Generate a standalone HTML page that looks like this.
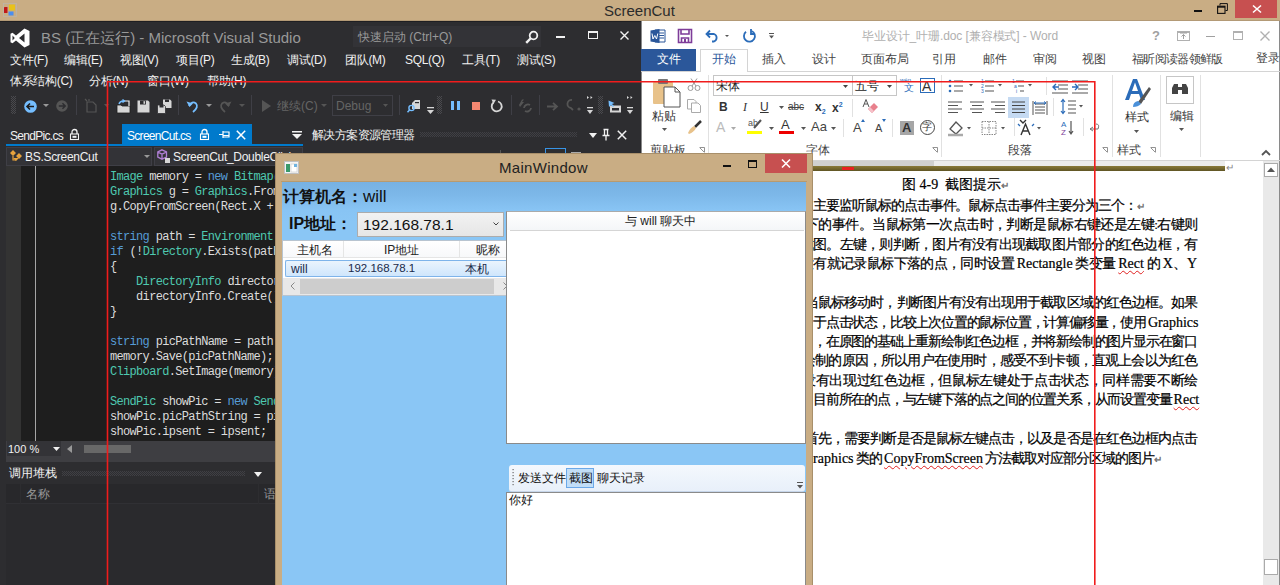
<!DOCTYPE html>
<html><head><meta charset="utf-8">
<style>
*{margin:0;padding:0;box-sizing:border-box}
html,body{width:1280px;height:585px;overflow:hidden}
body{position:relative;font-family:"Liberation Sans",sans-serif;background:#2d2d30}
.a{position:absolute;white-space:nowrap}
.t{position:absolute;white-space:nowrap;line-height:1}
svg{position:absolute;overflow:visible}
#vs{position:absolute;left:0;top:0;width:641px;height:585px;background:#2d2d30;overflow:hidden}
#vs .t{color:#f1f1f1}
#word{position:absolute;left:0;top:0;width:1280px;height:585px;clip-path:inset(0 0 0 641px)}
#top{position:absolute;left:0;top:0;width:1280px;height:21px;background:#c9ad84}
#mw{position:absolute;left:0;top:0;width:1280px;height:585px;clip-path:inset(153px 467px 0 275px)}
.code{font-family:"Liberation Mono",monospace;font-size:12px;letter-spacing:-0.68px;color:#dcdcdc;line-height:15px}
.ty{color:#4ec9b0}.kw{color:#569cd6}
.doc{font-family:"Liberation Serif",serif;font-size:13.5px;color:#000;line-height:13px;white-space:nowrap;-webkit-text-stroke:0.2px #000}
.j{position:absolute;text-align:justify;text-align-last:justify;white-space:nowrap;height:14px;overflow:visible;letter-spacing:-1.2px}
.L{letter-spacing:0;font-size:14px}
.sq{text-decoration:underline wavy #e02020;text-decoration-thickness:1px;text-underline-offset:2px}
</style></head><body>

<div id="vs">
  <div class="a" style="left:0;top:21px;width:641px;height:1px;background:#1f1f22"></div>
  <!-- VS logo -->
  <svg style="left:10px;top:28px" width="20" height="20" viewBox="0 0 20 20"><path d="M14.5 0.5 L19.5 3 V17 L14.5 19.5 L6 12.5 L2.5 15.3 L0.5 14.3 V5.7 L2.5 4.7 L6 7.5 Z M14.5 5.5 L9 10 L14.5 14.5 Z M2.5 7.5 V12.5 L4.8 10 Z" fill="#fff" fill-rule="evenodd"/></svg>
  <div class="t" style="left:41px;top:30px;font-size:15px;color:#999">BS (正在运行) - Microsoft Visual Studio</div>
  <!-- quick launch -->
  <div class="a" style="left:353px;top:26px;width:188px;height:21px;background:#333337"></div>
  <div class="t" style="left:358px;top:31px;font-size:12px;color:#999">快速启动 (Ctrl+Q)</div>
  <svg style="left:525px;top:30px" width="14" height="14" viewBox="0 0 14 14"><circle cx="8.5" cy="5.5" r="3.8" fill="none" stroke="#f1f1f1" stroke-width="1.8"/><path d="M6 8 L1.2 12.8" stroke="#f1f1f1" stroke-width="2.4"/></svg>
  <div class="a" style="left:556px;top:36px;width:9px;height:2px;background:#f1f1f1"></div>
  <div class="a" style="left:588px;top:31px;width:10px;height:8px;border:1px solid #f1f1f1;border-top-width:2px"></div>
  <svg style="left:620px;top:31px" width="9" height="9" viewBox="0 0 9 9"><path d="M0.5 0.5 L8.5 8.5 M8.5 0.5 L0.5 8.5" stroke="#f1f1f1" stroke-width="1.4"/></svg>
  <!-- menus -->
  <div class="t" style="left:10px;top:54px;font-size:12px;letter-spacing:-0.3px">文件(F)</div>
  <div class="t" style="left:64px;top:54px;font-size:12px;letter-spacing:-0.3px">编辑(E)</div>
  <div class="t" style="left:120px;top:54px;font-size:12px;letter-spacing:-0.3px">视图(V)</div>
  <div class="t" style="left:176px;top:54px;font-size:12px;letter-spacing:-0.3px">项目(P)</div>
  <div class="t" style="left:231px;top:54px;font-size:12px;letter-spacing:-0.3px">生成(B)</div>
  <div class="t" style="left:287px;top:54px;font-size:12px;letter-spacing:-0.3px">调试(D)</div>
  <div class="t" style="left:345px;top:54px;font-size:12px;letter-spacing:-0.3px">团队(M)</div>
  <div class="t" style="left:405px;top:54px;font-size:12px;letter-spacing:-0.3px">SQL(Q)</div>
  <div class="t" style="left:462px;top:54px;font-size:12px;letter-spacing:-0.3px">工具(T)</div>
  <div class="t" style="left:517px;top:54px;font-size:12px;letter-spacing:-0.3px">测试(S)</div>
  <div class="t" style="left:10px;top:75px;font-size:12px;letter-spacing:-0.3px">体系结构(C)</div>
  <div class="t" style="left:89px;top:75px;font-size:12px;letter-spacing:-0.3px">分析(N)</div>
  <div class="t" style="left:147px;top:75px;font-size:12px;letter-spacing:-0.3px">窗口(W)</div>
  <div class="t" style="left:207px;top:75px;font-size:12px;letter-spacing:-0.3px">帮助(H)</div>
  <!-- toolbar -->
  <svg style="left:11px;top:96px" width="5" height="18"><defs><pattern id="p11_96" width="2" height="2" patternUnits="userSpaceOnUse"><rect x="0" y="0" width="1" height="1" fill="#4a4a4e"/><rect x="1" y="1" width="1" height="1" fill="#4a4a4e"/></pattern></defs><rect width="5" height="18" fill="url(#p11_96)"/></svg>
  <svg style="left:24px;top:100px" width="13" height="13" viewBox="0 0 13 13"><circle cx="6.5" cy="6.5" r="6.3" fill="#75beff"/><path d="M3 6.5 H10 M6 3.5 L3 6.5 L6 9.5" stroke="#1e1e1e" stroke-width="1.6" fill="none"/></svg>
  <svg style="left:43px;top:104px" width="6" height="3"><path d="M0 0 H6 L3 3Z" fill="#999"/></svg>
  <svg style="left:56px;top:100px" width="12" height="12" viewBox="0 0 13 13"><circle cx="6.5" cy="6.5" r="6.3" fill="#555"/><path d="M3 6.5 H10 M7 3.5 L10 6.5 L7 9.5" stroke="#2d2d30" stroke-width="1.6" fill="none"/></svg>
  <div class="a" style="left:76px;top:95px;width:1px;height:20px;background:#3f3f46"></div>
  <svg style="left:84px;top:98px" width="13" height="15" viewBox="0 0 13 15"><path d="M3 4 H9 L12 7 V14 H3 Z M1 1 L3 3 M5 1 V3" fill="none" stroke="#555" stroke-width="1.2"/></svg>
  <svg style="left:104px;top:104px" width="5" height="3"><path d="M0 0 H5 L2.5 3Z" fill="#555"/></svg>
  <svg style="left:116px;top:99px" width="15" height="15" viewBox="0 0 15 15"><path d="M1 6 H5 L6 7 H14 V14 H1 Z" fill="#d6d6d6" stroke="#1e1e1e" stroke-width="0.8"/><path d="M7 2 H13 V7" fill="none" stroke="#f1f1f1" stroke-width="1.2"/><path d="M3 5 Q4 1.5 8 2 M6.5 0.5 L8.5 2 L6.5 3.5" fill="none" stroke="#75beff" stroke-width="1.4"/></svg>
  <svg style="left:137px;top:100px" width="13" height="13" viewBox="0 0 13 13"><path d="M0.5 0.5 H11 L12.5 2 V12.5 H0.5 Z" fill="#d6d6d6"/><path d="M3 0.5 H9 V4.5 H3Z" fill="#2d2d30"/><rect x="6.5" y="1.2" width="1.6" height="2.6" fill="#d6d6d6"/></svg>
  <svg style="left:157px;top:99px" width="15" height="15" viewBox="0 0 15 15"><path d="M6 0.5 H13 L14.5 2 V9 H6 Z" fill="#d6d6d6"/><path d="M8 0.5 H12 V3 H8Z" fill="#2d2d30"/><path d="M0.5 6 H7 L8.5 7.5 V14.5 H0.5 Z" fill="#d6d6d6" stroke="#2d2d30" stroke-width="0.8"/><path d="M2.5 6 H6.5 V8.5 H2.5Z" fill="#2d2d30"/></svg>
  <div class="a" style="left:178px;top:95px;width:1px;height:20px;background:#3f3f46"></div>
  <svg style="left:186px;top:100px" width="13" height="13" viewBox="0 0 13 13"><path d="M3 6 Q6 0.5 10 3.5 Q13 7 7 12" fill="none" stroke="#75beff" stroke-width="1.8"/><path d="M0.5 1.5 L3.5 7 L7 3.5Z" fill="#75beff"/></svg>
  <svg style="left:206px;top:104px" width="6" height="3"><path d="M0 0 H6 L3 3Z" fill="#999"/></svg>
  <svg style="left:219px;top:100px" width="13" height="13" viewBox="0 0 13 13"><path d="M10 6 Q7 0.5 3 3.5 Q0 7 6 12" fill="none" stroke="#555" stroke-width="1.8"/><path d="M12.5 1.5 L9.5 7 L6 3.5Z" fill="#555"/></svg>
  <svg style="left:239px;top:104px" width="6" height="3"><path d="M0 0 H6 L3 3Z" fill="#555"/></svg>
  <div class="a" style="left:251px;top:95px;width:1px;height:20px;background:#3f3f46"></div>
  <svg style="left:262px;top:100px" width="9" height="12"><path d="M0 0 L9 6 L0 12Z" fill="#555"/></svg>
  <div class="t" style="left:277px;top:100px;font-size:12px;color:#656565!important">继续(C)</div>
  <svg style="left:321px;top:104px" width="6" height="3"><path d="M0 0 H6 L3 3Z" fill="#555"/></svg>
  <div class="a" style="left:332px;top:95px;width:61px;height:21px;border:1px solid #3f3f46"></div>
  <div class="t" style="left:336px;top:100px;font-size:12px;color:#656565!important">Debug</div>
  <svg style="left:383px;top:104px" width="5" height="3"><path d="M0 0 H5 L2.5 3Z" fill="#555"/></svg>
  <div class="a" style="left:399px;top:95px;width:1px;height:20px;background:#3f3f46"></div>
  <svg style="left:407px;top:99px" width="14" height="14" viewBox="0 0 14 14"><path d="M5 4 L8 1 H13 V10 H5Z" fill="#d6d6d6"/><rect x="8" y="3" width="4" height="1.2" fill="#2d2d30"/><circle cx="4.5" cy="9" r="2.6" fill="none" stroke="#75beff" stroke-width="1.4"/><path d="M2.6 11 L0.5 13.2" stroke="#75beff" stroke-width="1.6"/></svg>
  <svg style="left:427px;top:107px" width="7" height="7"><rect x="0" y="0" width="7" height="1.3" fill="#d6d6d6"/><path d="M0 3 H7 L3.5 7Z" fill="#d6d6d6"/></svg>
  <svg style="left:437px;top:96px" width="5" height="18"><defs><pattern id="p437_96" width="2" height="2" patternUnits="userSpaceOnUse"><rect x="0" y="0" width="1" height="1" fill="#4a4a4e"/><rect x="1" y="1" width="1" height="1" fill="#4a4a4e"/></pattern></defs><rect width="5" height="18" fill="url(#p437_96)"/></svg>
  <div class="a" style="left:451px;top:101px;width:3px;height:9px;background:#75beff"></div>
  <div class="a" style="left:457px;top:101px;width:3px;height:9px;background:#75beff"></div>
  <div class="a" style="left:472px;top:102px;width:8px;height:8px;background:#f48771"></div>
  <svg style="left:490px;top:99px" width="13" height="14" viewBox="0 0 13 14"><path d="M3.5 3.5 A5 5 0 1 0 8 2.5" fill="none" stroke="#d6d6d6" stroke-width="1.8"/><path d="M1.5 0.5 L6 0.8 L3.5 5Z" fill="#d6d6d6"/></svg>
  <div class="a" style="left:511px;top:95px;width:1px;height:20px;background:#3f3f46"></div>
  <svg style="left:518px;top:99px" width="14" height="14" viewBox="0 0 14 14"><path d="M1 6 L4 0.5 H6 L4 3 H6 L2 8" fill="#555"/><path d="M6 9 A4 4 0 0 1 12 6 M13 9 A4 4 0 0 1 7 12" fill="none" stroke="#555" stroke-width="1.8"/></svg>
  <div class="a" style="left:539px;top:95px;width:1px;height:20px;background:#3f3f46"></div>
  <svg style="left:547px;top:102px" width="12" height="9"><path d="M0 4.5 H10 M6 0.8 L10 4.5 L6 8.2" fill="none" stroke="#555" stroke-width="1.8"/></svg>
  <svg style="left:567px;top:99px" width="14" height="13" viewBox="0 0 14 13"><path d="M5 1 A4 4 0 0 0 4 9 L6 11" fill="none" stroke="#555" stroke-width="1.8"/><circle cx="12" cy="10" r="1.6" fill="#555"/></svg>
  <svg style="left:587px;top:96px" width="7" height="19"><path d="M0 0 L2 1.5 L0 3Z M3.5 0 L5.5 1.5 L3.5 3Z" fill="#d6d6d6"/><rect x="0" y="11" width="6" height="1.3" fill="#d6d6d6"/><path d="M0 14 H6 L3 18Z" fill="#d6d6d6"/></svg>
  <svg style="left:598px;top:96px" width="5" height="18"><defs><pattern id="p598_96" width="2" height="2" patternUnits="userSpaceOnUse"><rect x="0" y="0" width="1" height="1" fill="#4a4a4e"/><rect x="1" y="1" width="1" height="1" fill="#4a4a4e"/></pattern></defs><rect width="5" height="18" fill="url(#p598_96)"/></svg>
  <svg style="left:608px;top:100px" width="14" height="13" viewBox="0 0 14 13"><rect x="2" y="5.5" width="11" height="7" fill="#d6d6d6"/><rect x="4" y="8" width="7" height="2.5" fill="#2d2d30"/><path d="M0.5 0.5 L1 7 L3 5 L5 7 L6 6 L4 4 L6.5 3Z" fill="#75beff"/></svg>
  <svg style="left:627px;top:96px" width="7" height="19"><path d="M0 0 L2 1.5 L0 3Z M3.5 0 L5.5 1.5 L3.5 3Z" fill="#d6d6d6"/><rect x="0" y="11" width="6" height="1.3" fill="#d6d6d6"/><path d="M0 14 H6 L3 18Z" fill="#d6d6d6"/></svg>
  <!-- tabs -->
  <div class="t" style="left:10px;top:130px;font-size:12px;letter-spacing:-0.7px;color:#f1f1f1">SendPic.cs</div>
  <svg style="left:70px;top:129px" width="9" height="11" viewBox="0 0 9 11"><path d="M2 5 V3 A2.5 2.5 0 0 1 7 3 V5" fill="none" stroke="#f1f1f1" stroke-width="1.3"/><rect x="0.5" y="5" width="8" height="5.5" fill="none" stroke="#f1f1f1" stroke-width="1.1"/><rect x="2.5" y="6.8" width="4" height="2" fill="#f1f1f1"/></svg>
  <div class="a" style="left:122px;top:124px;width:130px;height:21px;background:#007acc"></div>
  <div class="t" style="left:127px;top:130px;font-size:12px;letter-spacing:-0.7px;color:#fff">ScreenCut.cs</div>
  <svg style="left:200px;top:129px" width="9" height="11" viewBox="0 0 9 11"><path d="M2 5 V3 A2.5 2.5 0 0 1 7 3 V5" fill="none" stroke="#fff" stroke-width="1.3"/><rect x="0.5" y="5" width="8" height="5.5" fill="none" stroke="#fff" stroke-width="1.1"/><rect x="2.5" y="6.8" width="4" height="2" fill="#fff"/></svg>
  <svg style="left:219px;top:130px" width="11" height="9" viewBox="0 0 11 9"><path d="M0 4.5 H4 M4 1 V8 M4 2 H10 V7 H4 M4 5.5 H10" fill="none" stroke="#fff" stroke-width="1.2"/></svg>
  <svg style="left:236px;top:130px" width="10" height="10" viewBox="0 0 10 10"><path d="M0.8 0.8 L9.2 9.2 M9.2 0.8 L0.8 9.2" stroke="#fff" stroke-width="1.5"/></svg>
  <div class="a" style="left:6px;top:144px;width:297px;height:2px;background:#007acc"></div>
  <svg style="left:292px;top:131px" width="10" height="8"><rect x="0" y="0" width="10" height="1.5" fill="#f1f1f1"/><path d="M0 3 H10 L5 8Z" fill="#f1f1f1"/></svg>
  <div class="t" style="left:312px;top:129px;font-size:12px;letter-spacing:-0.6px;color:#f1f1f1">解决方案资源管理器</div>
  <svg style="left:420px;top:132px" width="157" height="5"><defs><pattern id="p420_132" width="2" height="2" patternUnits="userSpaceOnUse"><rect x="0" y="0" width="1" height="1" fill="#404045"/><rect x="1" y="1" width="1" height="1" fill="#404045"/></pattern></defs><rect width="157" height="5" fill="url(#p420_132)"/></svg>
  <svg style="left:589px;top:133px" width="8" height="5"><path d="M0 0 H8 L4 5Z" fill="#f1f1f1"/></svg>
  <svg style="left:602px;top:129px" width="8" height="12" viewBox="0 0 8 12"><path d="M1.5 0.5 H6.5 M2.5 0.5 V6.5 M5.5 0.5 V6.5 M0.5 6.5 H7.5 M4 6.5 V11.5" fill="none" stroke="#f1f1f1" stroke-width="1.3"/></svg>
  <svg style="left:617px;top:130px" width="10" height="10" viewBox="0 0 10 10"><path d="M0.8 0.8 L9.2 9.2 M9.2 0.8 L0.8 9.2" stroke="#f1f1f1" stroke-width="1.5"/></svg>
  <div class="a" style="left:545px;top:148px;width:21px;height:8px;border:1px solid #3794e6;border-bottom:none"></div>
  <div class="a" style="left:500px;top:150px;width:1px;height:4px;background:#555"></div>
  <div class="a" style="left:571px;top:152px;width:10px;height:2px;background:#aaa"></div>
  <!-- nav bar -->
  <div class="a" style="left:6px;top:146px;width:297px;height:20px;background:#2d2d30"></div>
  <div class="a" style="left:6px;top:147px;width:146px;height:19px;background:#333337;border:1px solid #3f3f46"></div>
  <div class="a" style="left:154px;top:147px;width:149px;height:19px;background:#333337;border:1px solid #3f3f46"></div>
  <svg style="left:9px;top:149px" width="15" height="14" viewBox="0 0 15 14"><path d="M1 4 L4 1 L7 4 L4 7Z M7 7 L10 4 L13 7 L10 10Z M4 9 L7 12 L10 9" fill="#e8a33d"/><path d="M4 7 V11 H7" fill="none" stroke="#e8a33d" stroke-width="1.2"/></svg>
  <div class="t" style="left:25px;top:151px;font-size:12px;letter-spacing:-0.3px;color:#f1f1f1">BS.ScreenCut</div>
  <svg style="left:144px;top:155px" width="6" height="3"><path d="M0 0 H6 L3 3Z" fill="#999"/></svg>
  <svg style="left:157px;top:149px" width="14" height="15" viewBox="0 0 14 15"><path d="M5 0.8 L9.5 3 V8 L5 10.2 L0.8 8 V3Z M0.8 3 L5 5.2 L9.5 3 M5 5.2 V10.2" fill="none" stroke="#b180d7" stroke-width="1.3"/><rect x="8" y="9" width="5" height="5" fill="#d6d6d6"/></svg>
  <div class="t" style="left:173px;top:151px;font-size:12px;letter-spacing:-0.3px;color:#f1f1f1">ScreenCut_DoubleClick</div>
  <!-- code area -->
  <div class="a" style="left:6px;top:166px;width:15px;height:275px;background:#333333"></div>
  <div class="a" style="left:21px;top:166px;width:620px;height:275px;background:#1e1e1e"></div>
  <div class="a" style="left:35px;top:166px;width:1px;height:275px;background:#a5a5a5"></div>
  <div class="a" style="left:110px;top:166px;width:531px;height:275px;overflow:hidden"><div class="a code" style="left:0;top:4px">
<span class="ty">Image</span> memory = <span class="kw">new</span> <span class="ty">Bitmap</span>(Rect.Width, Rect.Height);<br>
<span class="ty">Graphics</span> g = <span class="ty">Graphics</span>.FromImage(memory);<br>
g.CopyFromScreen(Rect.X + 1, Rect.Y + 1, 0, 0, Rect.Size);<br>
<br>
<span class="kw">string</span> path = <span class="ty">Environment</span>.CurrentDirectory;<br>
<span class="kw">if</span> (!<span class="ty">Directory</span>.Exists(path))<br>
{<br>
&nbsp;&nbsp;&nbsp;&nbsp;<span class="ty">DirectoryInfo</span> directoryInfo = <span class="kw">new</span> <span class="ty">DirectoryInfo</span>(path);<br>
&nbsp;&nbsp;&nbsp;&nbsp;directoryInfo.Create();<br>
}<br>
<br>
<span class="kw">string</span> picPathName = path + <span>"\\pic.png"</span>;<br>
memory.Save(picPathName);<br>
<span class="ty">Clipboard</span>.SetImage(memory);<br>
<br>
<span class="ty">SendPic</span> showPic = <span class="kw">new</span> <span class="ty">SendPic</span>();<br>
showPic.picPathString = picPathName;<br>
showPic.ipsent = ipsent;<br>
showPic.Show();
  </div></div>
  <!-- zoom/scroll row -->
  <div class="a" style="left:6px;top:441px;width:635px;height:21px;background:#3e3e42"></div>
  <div class="a" style="left:7px;top:441px;width:54px;height:15px;background:#333337"></div>
  <div class="t" style="left:8px;top:444px;font-size:11px;color:#f1f1f1">100 %</div>
  <svg style="left:53px;top:447px" width="7" height="4"><path d="M0 0 H7 L3.5 4Z" fill="#f1f1f1"/></svg>
  <svg style="left:67px;top:445px" width="5" height="8"><path d="M5 0 V8 L0 4Z" fill="#999"/></svg>
  <div class="a" style="left:84px;top:445px;width:47px;height:8px;background:#686868"></div>
  <!-- call stack panel -->
  <div class="t" style="left:9px;top:467px;font-size:12px;color:#f1f1f1">调用堆栈</div>
  <svg style="left:62px;top:471px" width="183" height="5"><defs><pattern id="p62_471" width="2" height="2" patternUnits="userSpaceOnUse"><rect x="0" y="0" width="1" height="1" fill="#404045"/><rect x="1" y="1" width="1" height="1" fill="#404045"/></pattern></defs><rect width="183" height="5" fill="url(#p62_471)"/></svg>
  <svg style="left:254px;top:472px" width="8" height="5"><path d="M0 0 H8 L4 5Z" fill="#f1f1f1"/></svg>
  <div class="a" style="left:6px;top:484px;width:635px;height:101px;background:#2a2a2d"></div>
  <div class="a" style="left:6px;top:484px;width:635px;height:20px;background:#28282b;border-bottom:1px solid #303034"></div>
  <div class="a" style="left:20px;top:484px;width:1px;height:20px;background:#2d2d30"></div>
  <div class="a" style="left:258px;top:484px;width:1px;height:20px;background:#2d2d30"></div>
  <div class="t" style="left:26px;top:488px;font-size:12px;color:#999!important">名称</div>
  <div class="t" style="left:264px;top:488px;font-size:12px;color:#999!important">语言</div>
</div>

<div id="word">
  <div class="a" style="left:641px;top:21px;width:639px;height:564px;background:#fff"></div>
  <div class="a" style="left:641px;top:21px;width:1px;height:564px;background:#8a8a8a"></div>
  <div class="a" style="left:1279px;top:21px;width:1px;height:564px;background:#8a8a8a"></div>
  <!-- QAT -->
  <svg style="left:650px;top:28px" width="16" height="16" viewBox="0 0 16 16"><path d="M5 2 H15 V14 H5Z" fill="#fff" stroke="#2b579a" stroke-width="1"/><path d="M9 5 H14 M9 7.5 H14 M9 10 H14" stroke="#2b579a" stroke-width="1"/><path d="M0.5 2.5 L9.5 1 V15 L0.5 13.5Z" fill="#2b579a"/><path d="M2 5.5 L3 11 L4.8 7.5 L6.5 11 L7.8 5.5" fill="none" stroke="#fff" stroke-width="1"/></svg>
  <svg style="left:678px;top:29px" width="14" height="14" viewBox="0 0 14 14"><path d="M0.5 0.5 H13.5 V13.5 H0.5Z M3 0.5 V5 H11 V0.5 M3.5 13.5 V9 H10.5 V13.5" fill="none" stroke="#7e3c99" stroke-width="1.6"/><rect x="6" y="10" width="2" height="3" fill="#7e3c99"/></svg>
  <svg style="left:705px;top:29px" width="14" height="13" viewBox="0 0 14 13"><path d="M2 5 H9 A4 4 0 0 1 9 12.5 H7" fill="none" stroke="#2b6cb9" stroke-width="1.8"/><path d="M5 1.5 L1.5 5 L5 8.5" fill="none" stroke="#2b6cb9" stroke-width="1.8"/></svg>
  <svg style="left:725px;top:35px" width="4" height="2"><path d="M0 0 H4 L2 2Z" fill="#555"/></svg>
  <svg style="left:742px;top:29px" width="15" height="14" viewBox="0 0 15 14"><path d="M9.5 2 A5.5 5.5 0 1 1 4 2.8" fill="none" stroke="#2b6cb9" stroke-width="1.8"/><path d="M9 0 V5 H13" fill="none" stroke="#2b6cb9" stroke-width="1.8"/></svg>
  <svg style="left:769px;top:33px" width="5" height="6"><rect x="0" y="0" width="5" height="1" fill="#555"/><path d="M0 2.5 H5 L2.5 5.5Z" fill="#555"/></svg>
  <div class="t" style="left:862px;top:30px;font-size:12px;letter-spacing:-0.1px;color:#b0b0b0">毕业设计_叶珊.doc [兼容模式] - Word</div>
  <div class="t" style="left:1152px;top:29px;font-size:13px;color:#a0a0a0;font-weight:bold">?</div>
  <div class="a" style="left:1177px;top:31px;width:13px;height:10px;border:1px solid #b0b0b0;border-top-width:2px"></div>
  <svg style="left:1180px;top:33px" width="7" height="6"><path d="M0 0 H7 M3.5 6 V1.5 M1.5 3.5 L3.5 1.5 L5.5 3.5" fill="none" stroke="#a0a0a0" stroke-width="1"/></svg>
  <div class="a" style="left:1206px;top:36px;width:9px;height:1px;background:#a0a0a0"></div>
  <div class="a" style="left:1233px;top:31px;width:10px;height:9px;border:1px solid #b0b0b0;border-top-width:2px"></div>
  <svg style="left:1260px;top:31px" width="10" height="10" viewBox="0 0 10 10"><path d="M0.5 0.5 L9.5 9.5 M9.5 0.5 L0.5 9.5" stroke="#b0b0b0" stroke-width="1.4"/></svg>
  <!-- tabs -->
  <div class="a" style="left:641px;top:49px;width:55px;height:22px;background:#2b579a"></div>
  <div class="t" style="left:657px;top:53px;font-size:12px;color:#fff">文件</div>
  <div class="a" style="left:700px;top:49px;width:48px;height:23px;background:#fff;border:1px solid #d4d4d4;border-bottom:none;z-index:2"></div>
  <div class="a" style="left:641px;top:71px;width:639px;height:1px;background:#d4d4d4"></div>
  <div class="t" style="left:712px;top:53px;font-size:12px;color:#2b579a;z-index:3">开始</div>
  <div class="t" style="left:762px;top:53px;font-size:12px;color:#444">插入</div>
  <div class="t" style="left:812px;top:53px;font-size:12px;color:#444">设计</div>
  <div class="t" style="left:861px;top:53px;font-size:12px;color:#444">页面布局</div>
  <div class="t" style="left:932px;top:53px;font-size:12px;color:#444">引用</div>
  <div class="t" style="left:983px;top:53px;font-size:12px;color:#444">邮件</div>
  <div class="t" style="left:1033px;top:53px;font-size:12px;color:#444">审阅</div>
  <div class="t" style="left:1082px;top:53px;font-size:12px;color:#444">视图</div>
  <div class="t" style="left:1132px;top:53px;font-size:12px;letter-spacing:-0.7px;color:#444">福昕阅读器领鲜版</div>
  <div class="t" style="left:1256px;top:52px;font-size:12px;color:#444">登录</div>
  <!-- ribbon -->
  <div class="a" style="left:641px;top:160px;width:639px;height:1px;background:#d4d4d4"></div>
  <!-- clipboard -->
  <svg style="left:652px;top:78px" width="30" height="30" viewBox="0 0 30 30"><rect x="1" y="4" width="20" height="22" rx="1" fill="#e8c28a"/><rect x="6" y="1" width="10" height="5" rx="1" fill="#777"/><path d="M12 9 H23 L28 14 V29 H12Z" fill="#fff" stroke="#555" stroke-width="1"/><path d="M23 9 V14 H28" fill="none" stroke="#555" stroke-width="1"/></svg>
  <div class="t" style="left:652px;top:110px;font-size:12px;color:#333">粘贴</div>
  <svg style="left:662px;top:128px" width="5" height="3"><path d="M0 0 H5 L2.5 3Z" fill="#555"/></svg>
  <svg style="left:687px;top:78px" width="14" height="13" viewBox="0 0 14 13"><path d="M4 0.5 L9 8 M10 0.5 L5 8" stroke="#999" stroke-width="1"/><circle cx="3.5" cy="10" r="2.5" fill="none" stroke="#999"/><circle cx="10.5" cy="10" r="2.5" fill="none" stroke="#999"/></svg>
  <svg style="left:687px;top:99px" width="14" height="14" viewBox="0 0 14 14"><path d="M0.5 0.5 H7 L9 2.5 V10 H0.5Z" fill="#fff" stroke="#aaa"/><path d="M4.5 4 H11 L13.5 6.5 V13.5 H4.5Z" fill="#fff" stroke="#aaa"/></svg>
  <svg style="left:687px;top:120px" width="15" height="15" viewBox="0 0 15 15"><path d="M8 7 L14 1" stroke="#333" stroke-width="2.5"/><path d="M1 13 Q3 8 7 6 L9 8 Q7 12 2 14Z" fill="#e8c28a"/></svg>
  <div class="t" style="left:650px;top:144px;font-size:12px;color:#444">剪贴板</div>
  <svg style="left:699px;top:147px" width="6" height="6"><path d="M0.5 0.5 H5.5 V5.5 M1 1 L5 5" fill="none" stroke="#777" stroke-width="0.8"/></svg>
  <div class="a" style="left:708px;top:75px;width:1px;height:82px;background:#e1e1e1"></div>
  <!-- font group -->
  <div class="a" style="left:713px;top:75px;width:140px;height:21px;border:1px solid #c6c6c6;background:#fff"></div>
  <div class="t" style="left:716px;top:80px;font-size:12px;color:#222">宋体</div>
  <svg style="left:843px;top:85px" width="5" height="3"><path d="M0 0 H5 L2.5 3Z" fill="#444"/></svg>
  <div class="a" style="left:852px;top:75px;width:45px;height:21px;border:1px solid #c6c6c6;background:#fff"></div>
  <div class="t" style="left:855px;top:80px;font-size:12px;color:#222">五号</div>
  <svg style="left:887px;top:85px" width="5" height="3"><path d="M0 0 H5 L2.5 3Z" fill="#444"/></svg>
  <div class="t" style="left:900px;top:77px;font-size:6px;color:#2b6cb9">wén</div>
  <div class="t" style="left:904px;top:83px;font-size:10px;color:#2b6cb9">文</div>
  <div class="a" style="left:920px;top:78px;width:15px;height:15px;border:1px solid #2b6cb9"></div>
  <div class="t" style="left:922px;top:79px;font-size:14px;color:#333">A</div>
  <div class="t" style="left:719px;top:101px;font-size:12px;color:#333;font-weight:bold">B</div>
  <div class="t" style="left:743px;top:101px;font-size:12px;color:#333;font-style:italic;font-family:'Liberation Serif'">I</div>
  <div class="t" style="left:760px;top:101px;font-size:12px;color:#333;text-decoration:underline">U</div>
  <svg style="left:779px;top:106px" width="5" height="3"><path d="M0 0 H5 L2.5 3Z" fill="#555"/></svg>
  <div class="t" style="left:788px;top:102px;font-size:10px;color:#444;text-decoration:line-through">abc</div>
  <div class="t" style="left:815px;top:101px;font-size:12px;color:#333;font-weight:bold">x<sub style="font-size:7px;color:#2b6cb9">2</sub></div>
  <div class="t" style="left:832px;top:101px;font-size:12px;color:#333;font-weight:bold">x<sup style="font-size:7px;color:#2b6cb9">2</sup></div>
  <div class="a" style="left:852px;top:99px;width:1px;height:18px;background:#e1e1e1"></div>
  <svg style="left:862px;top:99px" width="18" height="15" viewBox="0 0 18 15"><path d="M1 8 L4 0.5 L7 8 M2.2 5 H5.8" fill="none" stroke="#555" stroke-width="1"/><path d="M6 10 L12 4 L16 8 L10 14Z" fill="#e8808c"/><path d="M6 10 L8 8 L12 12 L10 14Z" fill="#f6c0c8"/></svg>
  <div class="t" style="left:716px;top:120px;font-size:14px;color:#bbb">A</div>
  <svg style="left:731px;top:127px" width="5" height="3"><path d="M0 0 H5 L2.5 3Z" fill="#aaa"/></svg>
  <div class="t" style="left:748px;top:119px;font-size:9px;color:#555">ab</div>
  <svg style="left:752px;top:119px" width="10" height="10"><path d="M2 9 L9 1" stroke="#555" stroke-width="2"/></svg>
  <div class="a" style="left:747px;top:131px;width:15px;height:3px;background:#ffff00"></div>
  <svg style="left:769px;top:127px" width="5" height="3"><path d="M0 0 H5 L2.5 3Z" fill="#555"/></svg>
  <div class="t" style="left:781px;top:118px;font-size:13px;color:#333">A</div>
  <div class="a" style="left:779px;top:131px;width:15px;height:3px;background:#e00"></div>
  <svg style="left:801px;top:127px" width="5" height="3"><path d="M0 0 H5 L2.5 3Z" fill="#555"/></svg>
  <div class="t" style="left:811px;top:120px;font-size:13px;color:#444">Aa</div>
  <svg style="left:831px;top:127px" width="5" height="3"><path d="M0 0 H5 L2.5 3Z" fill="#555"/></svg>
  <div class="a" style="left:843px;top:119px;width:1px;height:18px;background:#e1e1e1"></div>
  <div class="t" style="left:853px;top:121px;font-size:13px;color:#444">A</div>
  <svg style="left:861px;top:119px" width="4" height="3"><path d="M0 3 H4 L2 0Z" fill="#2b6cb9"/></svg>
  <div class="t" style="left:875px;top:123px;font-size:11px;color:#444">A</div>
  <svg style="left:882px;top:119px" width="4" height="3"><path d="M0 0 H4 L2 3Z" fill="#2b6cb9"/></svg>
  <div class="a" style="left:892px;top:119px;width:1px;height:18px;background:#e1e1e1"></div>
  <div class="a" style="left:900px;top:121px;width:14px;height:14px;background:#a6a6a6"></div>
  <div class="t" style="left:902px;top:121px;font-size:13px;color:#333;font-weight:bold">A</div>
  <div class="a" style="left:920px;top:120px;width:15px;height:15px;border:1px solid #444;border-radius:50%"></div>
  <div class="t" style="left:922px;top:122px;font-size:10px;color:#333">字</div>
  <div class="t" style="left:806px;top:144px;font-size:12px;color:#444">字体</div>
  <svg style="left:932px;top:147px" width="6" height="6"><path d="M0.5 0.5 H5.5 V5.5 M1 1 L5 5" fill="none" stroke="#777" stroke-width="0.8"/></svg>
  <div class="a" style="left:941px;top:75px;width:1px;height:82px;background:#e1e1e1"></div>
  <!-- paragraph group -->
  <svg style="left:948px;top:79px" width="160" height="60" viewBox="0 0 160 60">
    <g fill="#2b6cb9"><circle cx="2" cy="2" r="1.3"/><circle cx="2" cy="7" r="1.3"/><circle cx="2" cy="12" r="1.3"/></g>
    <path d="M6 2 H15 M6 7 H15 M6 12 H15" stroke="#555" stroke-width="1.2"/>
    <path d="M21 5 L23 7.5 L25 5" fill="#555"/>
    <g fill="#2b6cb9" font-size="5" font-family="Liberation Sans"><text x="33" y="4">1</text><text x="33" y="9">2</text><text x="33" y="14">3</text></g>
    <path d="M37 2 H46 M37 7 H46 M37 12 H46" stroke="#555" stroke-width="1.2"/>
    <path d="M50 5 L52 7.5 L54 5" fill="#555"/>
    <g fill="#2b6cb9" font-size="5" font-family="Liberation Sans"><text x="64" y="4">1</text><text x="66" y="9">a</text><text x="68" y="14">i</text></g>
    <path d="M68 2 H76 M70 7 H76 M72 12 H76" stroke="#555" stroke-width="1.2"/>
    <path d="M80 5 L82 7.5 L84 5" fill="#555"/>
    <path d="M104 2 H120 M110 6 H120 M110 10 H120 M104 14 H120" stroke="#555" stroke-width="1.2"/>
    <path d="M111 8 H105 M108 5 L105 8 L108 11" fill="none" stroke="#2b6cb9" stroke-width="1.4"/>
    <path d="M124 2 H140 M130 6 H140 M130 10 H140 M124 14 H140" stroke="#555" stroke-width="1.2"/>
    <path d="M124 8 H130 M127 5 L130 8 L127 11" fill="none" stroke="#2b6cb9" stroke-width="1.4"/>
  </svg>
  <div class="a" style="left:1046px;top:77px;width:1px;height:18px;background:#e1e1e1"></div>
  <svg style="left:948px;top:99px" width="140" height="20" viewBox="0 0 140 20">
    <path d="M0 3 H14 M0 6.5 H10 M0 10 H14 M0 13.5 H10" stroke="#555" stroke-width="1.2"/>
    <path d="M22 3 H36 M24 6.5 H34 M22 10 H36 M24 13.5 H34" stroke="#555" stroke-width="1.2"/>
    <path d="M43 3 H57 M47 6.5 H57 M43 10 H57 M47 13.5 H57" stroke="#555" stroke-width="1.2"/>
  </svg>
  <div class="a" style="left:1008px;top:97px;width:21px;height:21px;background:#c5daf2"></div>
  <svg style="left:1008px;top:99px" width="70" height="20" viewBox="0 0 70 20">
    <path d="M4 3 H17 M4 6.5 H17 M4 10 H17 M4 13.5 H17" stroke="#444" stroke-width="1.2"/>
    <path d="M25 2 V16 M39 2 V16 M27 5 H37 M27 8 H37 M27 11 H37 M27 14 H37" stroke="#555" stroke-width="1"/>
    <path d="M26 4 H38 M28 2.5 L26 4 L28 5.5 M36 2.5 L38 4 L36 5.5" fill="none" stroke="#2b6cb9" stroke-width="1"/>
  </svg>
  <div class="a" style="left:1053px;top:98px;width:1px;height:18px;background:#e1e1e1"></div>
  <svg style="left:1060px;top:98px" width="25" height="18" viewBox="0 0 25 18">
    <path d="M3 2 V15 M1 4 L3 1.5 L5 4 M1 13 L3 15.5 L5 13" fill="none" stroke="#2b6cb9" stroke-width="1.2"/>
    <path d="M8 3 H16 M8 7 H16 M8 11 H16 M8 15 H16" stroke="#555" stroke-width="1.2"/>
    <path d="M19 7 L21 9.5 L23 7" fill="#555"/>
  </svg>
  <svg style="left:948px;top:119px" width="160" height="20" viewBox="0 0 160 20">
    <path d="M2 10 L8 3 L14 9 L8 15Z" fill="none" stroke="#555" stroke-width="1.3"/>
    <path d="M0 16 H15" stroke="#aaa" stroke-width="2.5"/>
    <path d="M19 8 L21 10.5 L23 8" fill="#555"/>
    <path d="M34 2.5 H48 V15.5 H34Z M41 2.5 V15.5 M34 9 H48" fill="none" stroke="#888" stroke-width="1" stroke-dasharray="1.5 1"/>
    <path d="M53 8 L55 10.5 L57 8" fill="#555"/>
    <path d="M72 1 L75 4 L78 1 M73 16 L77.5 5 L82 16 M74.5 12 H80.5" fill="none" stroke="#333" stroke-width="1.4"/>
    <path d="M72 7 L70 5 M84 7 L86 5" stroke="#2b6cb9" stroke-width="1.3"/>
    <path d="M89 8 L91 10.5 L93 8" fill="#555"/>
    <text x="113" y="8" font-size="8" fill="#2b6cb9" font-family="Liberation Sans">A</text>
    <text x="113" y="16" font-size="8" fill="#7e3c99" font-family="Liberation Sans">Z</text>
    <path d="M123 2 V15 M121 12 L123 15 L125 12" fill="none" stroke="#555" stroke-width="1.2"/>
    <path d="M142 10 H150 M145 8 L142 10 L145 12" fill="none" stroke="#777" stroke-width="1"/>
    <path d="M148 5 Q152 5 150 10" fill="none" stroke="#777"/>
  </svg>
  <div class="a" style="left:1014px;top:118px;width:1px;height:18px;background:#e1e1e1"></div>
  <div class="a" style="left:1083px;top:118px;width:1px;height:18px;background:#e1e1e1"></div>
  <div class="t" style="left:1008px;top:144px;font-size:12px;color:#444">段落</div>
  <svg style="left:1102px;top:147px" width="6" height="6"><path d="M0.5 0.5 H5.5 V5.5 M1 1 L5 5" fill="none" stroke="#777" stroke-width="0.8"/></svg>
  <div class="a" style="left:1112px;top:75px;width:1px;height:82px;background:#e1e1e1"></div>
  <!-- styles -->
  <svg style="left:1124px;top:78px" width="28" height="30" viewBox="0 0 28 30"><path d="M1 22 L9 1 H13 L21 22 H17 L15 16 H7 L5 22Z M8 13 H14 L11 4.5Z" fill="#2b6cb9" fill-rule="evenodd"/><path d="M14 24 L25 9 L27 11 L17 26Z" fill="#555"/><path d="M9 29 Q9 24 14 23 L17 26 Q14 29 9 29Z" fill="#4a90d9"/></svg>
  <div class="t" style="left:1125px;top:111px;font-size:12px;color:#333">样式</div>
  <svg style="left:1134px;top:130px" width="5" height="3"><path d="M0 0 H5 L2.5 3Z" fill="#555"/></svg>
  <div class="t" style="left:1117px;top:144px;font-size:12px;color:#444">样式</div>
  <svg style="left:1150px;top:147px" width="6" height="6"><path d="M0.5 0.5 H5.5 V5.5 M1 1 L5 5" fill="none" stroke="#777" stroke-width="0.8"/></svg>
  <div class="a" style="left:1160px;top:75px;width:1px;height:82px;background:#e1e1e1"></div>
  <!-- editing -->
  <div class="a" style="left:1166px;top:76px;width:28px;height:28px;border:1px solid #c6c6c6"></div>
  <svg style="left:1172px;top:83px" width="16" height="12" viewBox="0 0 16 12"><path d="M2 1 H6 V11 H0 V5Z M10 1 H14 L16 5 V11 H10Z" fill="#444"/><rect x="6" y="4" width="4" height="3" fill="#444"/></svg>
  <div class="t" style="left:1170px;top:110px;font-size:12px;color:#333">编辑</div>
  <svg style="left:1179px;top:128px" width="5" height="3"><path d="M0 0 H5 L2.5 3Z" fill="#555"/></svg>
  <div class="a" style="left:1200px;top:75px;width:1px;height:82px;background:#e1e1e1"></div>
  <svg style="left:1261px;top:149px" width="10" height="7"><path d="M1 6 L5 2 L9 6" fill="none" stroke="#555" stroke-width="1.8"/></svg>
  <!-- document -->
  <div class="a" style="left:812px;top:161px;width:122px;height:5px;background:#d0d0d0"></div>
  <div class="a" style="left:934px;top:161px;width:291px;height:5px;background:#ececec"></div>
  <div class="a" style="left:812px;top:166px;width:413px;height:5px;background:linear-gradient(#8a7a3a,#5f5524)"></div>
  <div class="t" style="left:1226px;top:163px;font-size:10px;color:#888">↵</div>
  <div class="a" style="left:842px;top:167px;width:12px;height:3px;background:#e82020"></div>
  <div class="a" style="left:1263px;top:161px;width:16px;height:424px;background:#e9e9e9"></div>
  <div class="a" style="left:1264px;top:163px;width:14px;height:14px;border:1px solid #aaa;background:#fff"></div>
  <svg style="left:1267px;top:167px" width="8" height="5"><path d="M0 5 L4 0.5 L8 5Z" fill="#555"/></svg>
  <div class="a" style="left:1264px;top:559px;width:14px;height:16px;border:1px solid #aaa;background:#fff"></div>
  <div class="doc a" style="left:902px;top:178px;font-size:14px">图 4-9&nbsp; 截图提示<span style="color:#888;font-size:10px">↵</span></div>
  <div class="doc a" style="left:813px;top:199px;letter-spacing:-1.05px">主要监听鼠标的点击事件。鼠标点击事件主要分为三个：<span style="color:#888;font-size:10px">↵</span></div>
  <div class="doc j" style="left:805px;top:218px;width:392px">下的事件。当鼠标第一次点击时，判断是鼠标右键还是左键:右键则</div>
  <div class="doc j" style="left:800px;top:238px;width:397px">截图。左键，则判断，图片有没有出现截取图片部分的红色边框，有</div>
  <div class="doc j" style="left:800px;top:257px;width:397px">没有就记录鼠标下落的点，同时设置 <span class="L">Rectangle</span> 类变量 <u class="sq L">Rect</u> 的 <span class="L">X</span>、<span class="L">Y</span></div>
  <div class="doc j" style="left:805px;top:296px;width:392px">当鼠标移动时，判断图片有没有出现用于截取区域的红色边框。如果</div>
  <div class="doc j" style="left:813px;top:316px;width:384px">于点击状态，比较上次位置的鼠标位置，计算偏移量，使用 <span class="L">Graphics</span></div>
  <div class="doc j" style="left:813px;top:335px;width:384px">，在原图的基础上重新绘制红色边框，并将新绘制的图片显示在窗口</div>
  <div class="doc j" style="left:802px;top:354px;width:395px">绘制的原因，所以用户在使用时，感受不到卡顿，直观上会以为红色</div>
  <div class="doc j" style="left:802px;top:374px;width:395px">没有出现过红色边框，但鼠标左键处于点击状态，同样需要不断绘</div>
  <div class="doc j" style="left:813px;top:393px;width:384px">目前所在的点，与左键下落的点之间的位置关系，从而设置变量 <u class="sq L">Rect</u></div>
  <div class="doc j" style="left:805px;top:432px;width:392px">首先，需要判断是否是鼠标左键点击，以及是否是在红色边框内点击</div>
  <div class="doc a" style="left:803px;top:452px;letter-spacing:-1.05px"><span class="L">Graphics</span> 类的 <u class="sq L">CopyFromScreen</u> 方法截取对应部分区域的图片<span style="color:#888;font-size:10px">↵</span></div>
</div>

<div id="top">
  <svg style="left:3px;top:3px" width="14" height="14" viewBox="0 0 14 14"><rect x="0.5" y="0.5" width="13" height="13" fill="none" stroke="#b9b9b9" stroke-width="0.8" opacity="0.7"/><rect x="1" y="4" width="3.5" height="6" rx="0.5" fill="#c01818"/><rect x="6" y="1.5" width="6" height="6" rx="0.5" fill="#e8c21a"/><rect x="5.5" y="8.5" width="5" height="4" fill="#4a8ef0"/></svg>
  <div class="t" style="left:604px;top:3px;font-size:15px;color:#2b2b2b">ScreenCut</div>
  <div class="a" style="left:0;top:20px;width:1280px;height:1px;background:#b39a76"></div>
  <div class="a" style="left:1194px;top:10px;width:8px;height:2px;background:#111"></div>
  <svg style="left:1217px;top:3px" width="11" height="11" viewBox="0 0 11 11"><path d="M3 2.5 V0.6 H10.4 V7.5 H8.5" fill="none" stroke="#111" stroke-width="1"/><rect x="0.6" y="3.2" width="7.4" height="7.2" fill="none" stroke="#111" stroke-width="1.1"/><rect x="0.6" y="3.2" width="7.4" height="1.5" fill="#111"/></svg>
  <div class="a" style="left:1235px;top:0;width:42px;height:18px;background:#c75050"></div>
  <svg style="left:1252px;top:5px" width="10" height="8" viewBox="0 0 10 8"><path d="M1 0.5 L9 7.5 M9 0.5 L1 7.5" stroke="#fff" stroke-width="1.6"/></svg>
</div>

<div id="mw">
  <div class="a" style="left:275px;top:153px;width:538px;height:432px;background:#c9ad84;border:1px solid #a88f6a;border-bottom:none"></div>
  <svg style="left:284px;top:161px" width="15" height="13" viewBox="0 0 15 13"><rect x="0.5" y="0.5" width="14" height="12" fill="#f4f4f4" stroke="#c0c0c0"/><rect x="2" y="3" width="4" height="8" fill="#3a9a6a"/><rect x="7" y="3" width="6" height="8" fill="#fff" stroke="#bbb" stroke-width="0.5"/><rect x="10" y="3" width="3" height="3" fill="#6fb3e0"/></svg>
  <div class="t" style="left:499px;top:160px;font-size:15px;letter-spacing:0.3px;color:#222">MainWindow</div>
  <div class="a" style="left:723px;top:165px;width:8px;height:2px;background:#111"></div>
  <div class="a" style="left:748px;top:160px;width:9px;height:8px;border:1px solid #111;border-top-width:2px"></div>
  <div class="a" style="left:765px;top:154px;width:42px;height:19px;background:#c75050"></div>
  <svg style="left:781px;top:159px" width="10" height="9" viewBox="0 0 10 9"><path d="M1 0.5 L9 8.5 M9 0.5 L1 8.5" stroke="#fff" stroke-width="1.6"/></svg>
  <!-- client -->
  <div class="a" style="left:281px;top:181px;width:526px;height:1px;background:#b89a6e"></div>
  <div class="a" style="left:282px;top:182px;width:524px;height:403px;background:linear-gradient(#77b1e2 0px,#7cb7e8 12px,#88c4f4 28px,#8ac6f5 40px)"></div>
  <div class="t" style="left:283px;top:188px;font-size:16px;color:#111"><b>计算机名：</b><span style="font-size:17px">will</span></div>
  <div class="t" style="left:289px;top:216px;font-size:16px;color:#111;font-weight:bold">IP地址：</div>
  <div class="a" style="left:357px;top:212px;width:147px;height:25px;border:1px solid #acacac;background:linear-gradient(#f2f2f2,#e6e6e6)"></div>
  <div class="t" style="left:363px;top:217px;font-size:15.5px;color:#111">192.168.78.1</div>
  <svg style="left:493px;top:222px" width="6" height="4"><path d="M0.5 0.5 L3 3 L5.5 0.5" fill="none" stroke="#444" stroke-width="1"/></svg>
  <!-- list -->
  <div class="a" style="left:282px;top:240px;width:225px;height:56px;background:#fff;border:1px solid #b8c4d0;border-right:none"></div>
  <div class="a" style="left:283px;top:241px;width:224px;height:17px;background:linear-gradient(#fff,#f7f8fa);border-bottom:1px solid #e5e5e5"></div>
  <div class="a" style="left:343px;top:241px;width:1px;height:17px;background:#e5e5e5"></div>
  <div class="a" style="left:459px;top:241px;width:1px;height:17px;background:#e5e5e5"></div>
  <div class="t" style="left:297px;top:244px;font-size:12px;color:#222">主机名</div>
  <div class="t" style="left:384px;top:244px;font-size:12px;color:#222">IP地址</div>
  <div class="t" style="left:476px;top:244px;font-size:12px;color:#222">昵称</div>
  <div class="a" style="left:285px;top:260px;width:222px;height:17px;border:1px solid #7eb4ea;border-right:none;border-radius:2px 0 0 2px;background:linear-gradient(#eaf4fd,#cfe6fc)"></div>
  <div class="t" style="left:291px;top:263px;font-size:12px;color:#1a2a4a">will</div>
  <div class="t" style="left:348px;top:263px;font-size:11.5px;color:#1a2a4a">192.168.78.1</div>
  <div class="t" style="left:465px;top:263px;font-size:12px;color:#1a2a4a">本机</div>
  <div class="a" style="left:283px;top:278px;width:224px;height:17px;background:#e8e8e8"></div>
  <div class="a" style="left:300px;top:279px;width:194px;height:15px;background:#cdcdcd"></div>
  <svg style="left:290px;top:282px" width="5" height="8"><path d="M4.5 0.5 L1 4 L4.5 7.5" fill="none" stroke="#888" stroke-width="1"/></svg>
  <svg style="left:503px;top:282px" width="5" height="8"><path d="M0.5 0.5 L4 4 L0.5 7.5" fill="none" stroke="#888" stroke-width="1"/></svg>
  <!-- chat panel -->
  <div class="a" style="left:506px;top:211px;width:300px;height:233px;background:#fff;border:1px solid #8a8a8a;border-top-color:#aaa"></div>
  <div class="a" style="left:507px;top:212px;width:298px;height:18px;background:linear-gradient(#fff,#f4f6f8)"></div>
  <div class="a" style="left:510px;top:230px;width:294px;height:1px;background:#d5d5d5"></div>
  <div class="t" style="left:625px;top:215px;font-size:12px;color:#222">与 will 聊天中</div>
  <!-- toolbar -->
  <div class="a" style="left:509px;top:465px;width:296px;height:27px;background:linear-gradient(#f4f8fd,#e8f0fa);border-radius:3px;border-bottom:1px solid #c7d6ea"></div>
  <svg style="left:512px;top:469px" width="3" height="18"><g fill="#6d6d6d"><rect x="0.5" y="0" width="1.2" height="1.2"/><rect x="0.5" y="3" width="1.2" height="1.2"/><rect x="0.5" y="6" width="1.2" height="1.2"/><rect x="0.5" y="9" width="1.2" height="1.2"/><rect x="0.5" y="12" width="1.2" height="1.2"/><rect x="0.5" y="15" width="1.2" height="1.2"/></g></svg>
  <div class="t" style="left:518px;top:472px;font-size:12px;color:#111">发送文件</div>
  <div class="a" style="left:566px;top:468px;width:28px;height:20px;background:#c2def7;border:1px solid #6aa8e8"></div>
  <div class="t" style="left:569px;top:472px;font-size:12px;color:#111">截图</div>
  <div class="t" style="left:597px;top:472px;font-size:12px;color:#111">聊天记录</div>
  <svg style="left:797px;top:482px" width="6" height="7"><rect x="0" y="0" width="6" height="1" fill="#555"/><path d="M0 3 H6 L3 6.5Z" fill="#555"/></svg>
  <!-- input -->
  <div class="a" style="left:506px;top:492px;width:300px;height:100px;background:#fff;border:1px solid #8a8a8a"></div>
  <div class="t" style="left:509px;top:494px;font-size:12px;color:#111">你好</div>
</div>

<svg style="left:0;top:0" width="1280" height="585"><path d="M107.5 585 V81.8 H1094.8 V585" fill="none" stroke="#f01c1c" stroke-width="1.6"/></svg>

</body></html>
